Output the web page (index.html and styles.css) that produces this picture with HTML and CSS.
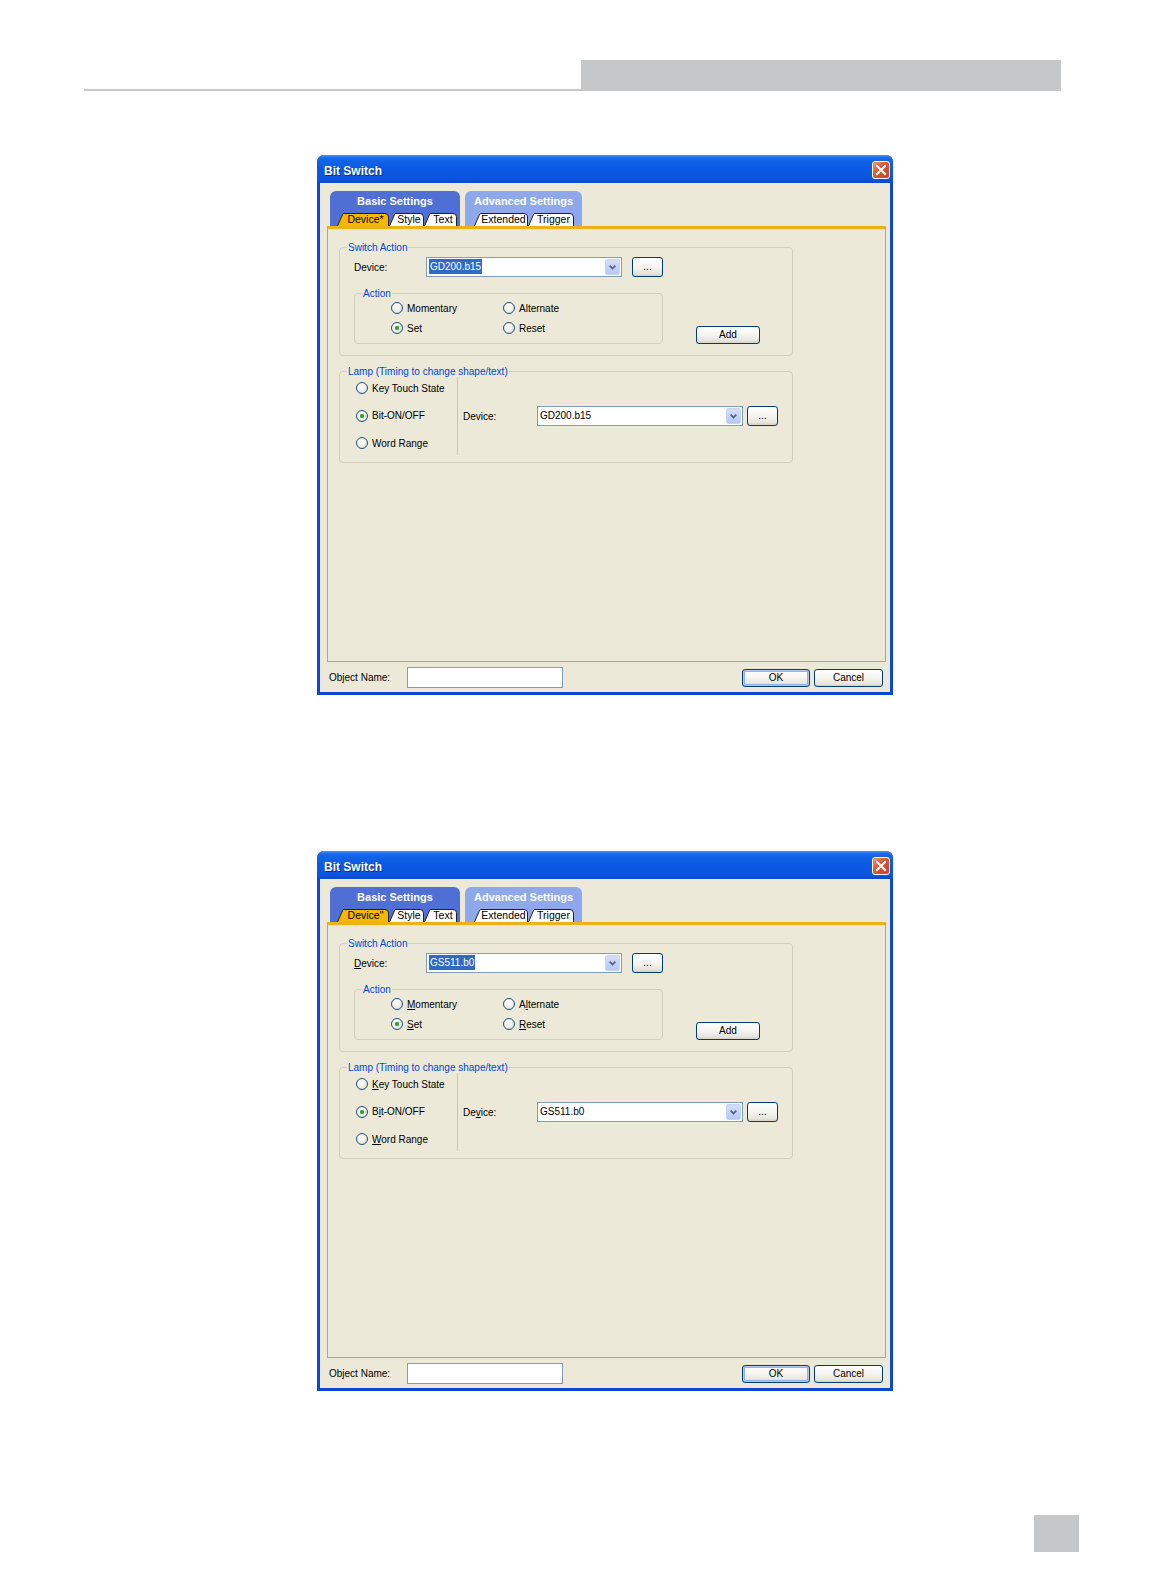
FILE: index.html
```html
<!DOCTYPE html>
<html lang="en">
<head>
  <meta charset="UTF-8" />
  <title>Bit Switch</title>
  <link rel="stylesheet" href="styles.css">
</head>
<body>
  <div class="page-head">
    <div class="rule"></div>
    <div class="head-tab"></div>
  </div>

  <!-- first dialog: keyboard focus not shown -->
  <div class="dialog">
    <div class="titlebar">
      <span class="title">Bit Switch</span>
      <span class="close"><svg width="16" height="16" viewBox="0 0 16 16"><path d="M4 4 L12 12 M12 4 L4 12" stroke="#fff" stroke-width="2" stroke-linecap="square"/></svg></span>
    </div>
    <div class="dlg-body">
      <div class="tabs">
        <div class="tabgroup basic">
          <div class="group-name">Basic Settings</div>
          <div class="subtabs">
            <span class="subtab active t-device"><svg width="52" height="13" viewBox="0 0 52 13"><path d="M0.5 13 L5.5 1.5 Q6 0.5 7 0.5 L48 0.5 Q51.5 0.5 51.5 4 L51.5 13" /></svg><span class="tab-text">Device*</span></span>
            <span class="subtab t-style"><svg width="35" height="13" viewBox="0 0 35 13"><path d="M0.5 13 L5.5 1.5 Q6 0.5 7 0.5 L31 0.5 Q34.5 0.5 34.5 4 L34.5 13" /></svg><span class="tab-text">Style</span></span>
            <span class="subtab t-text"><svg width="33" height="13" viewBox="0 0 33 13"><path d="M0.5 13 L5.5 1.5 Q6 0.5 7 0.5 L29 0.5 Q32.5 0.5 32.5 4 L32.5 13" /></svg><span class="tab-text">Text</span></span>
          </div>
        </div>
        <div class="tabgroup advanced">
          <div class="group-name">Advanced Settings</div>
          <div class="subtabs">
            <span class="subtab t-ext"><svg width="54" height="13" viewBox="0 0 54 13"><path d="M0.5 13 L5.5 1.5 Q6 0.5 7 0.5 L50 0.5 Q53.5 0.5 53.5 4 L53.5 13" /></svg><span class="tab-text">Extended</span></span>
            <span class="subtab t-trig"><svg width="46" height="13" viewBox="0 0 46 13"><path d="M0.5 13 L5.5 1.5 Q6 0.5 7 0.5 L42 0.5 Q45.5 0.5 45.5 4 L45.5 13" /></svg><span class="tab-text">Trigger</span></span>
          </div>
        </div>
      </div>

      <div class="panel">
        <fieldset class="group switch-action">
          <legend>Switch Action</legend>
          <div class="sa-inner">
            <div class="device-row">
              <span class="lbl">Device:</span>
              <div class="combo">
                <span class="val sel"><span>GD200.b15</span></span>
                <span class="arrow"><svg width="7" height="5" viewBox="0 0 7 5"><polyline points="0.7,0.7 3.5,3.5 6.3,0.7" fill="none" stroke="#4d6185" stroke-width="1.7"/></svg></span>
              </div>
              <button class="btn dots">...</button>
            </div>
            <div class="sa-lower">
              <fieldset class="group action">
                <legend>Action</legend>
                <div class="choices">
                  <span class="radio"><span class="dot"></span>Momentary</span>
                  <span class="radio"><span class="dot"></span>Alternate</span>
                  <span class="radio on"><span class="dot"></span>Set</span>
                  <span class="radio"><span class="dot"></span>Reset</span>
                </div>
              </fieldset>
              <button class="btn add">Add</button>
            </div>
          </div>
        </fieldset>

        <fieldset class="group lamp">
          <legend>Lamp (Timing to change shape/text)</legend>
          <div class="lamp-inner">
            <div class="lamp-opts">
              <span class="radio"><span class="dot"></span>Key Touch State</span>
              <span class="radio on"><span class="dot"></span>Bit-ON/OFF</span>
              <span class="radio"><span class="dot"></span>Word Range</span>
            </div>
            <div class="lamp-dev">
              <span class="lbl">Device:</span>
              <div class="combo">
                <span class="val"><span>GD200.b15</span></span>
                <span class="arrow"><svg width="7" height="5" viewBox="0 0 7 5"><polyline points="0.7,0.7 3.5,3.5 6.3,0.7" fill="none" stroke="#4d6185" stroke-width="1.7"/></svg></span>
              </div>
              <button class="btn dots">...</button>
            </div>
          </div>
        </fieldset>
      </div>

      <div class="footer">
        <span class="lbl">Object Name:</span>
        <span class="name-input"></span>
        <div class="btns">
          <button class="btn ok">OK</button>
          <button class="btn cancel">Cancel</button>
        </div>
      </div>
    </div>
  </div>

  <!-- second dialog: access keys underlined -->
  <div class="dialog">
    <div class="titlebar">
      <span class="title">Bit Switch</span>
      <span class="close"><svg width="16" height="16" viewBox="0 0 16 16"><path d="M4 4 L12 12 M12 4 L4 12" stroke="#fff" stroke-width="2" stroke-linecap="square"/></svg></span>
    </div>
    <div class="dlg-body">
      <div class="tabs">
        <div class="tabgroup basic">
          <div class="group-name">Basic Settings</div>
          <div class="subtabs">
            <span class="subtab active t-device"><svg width="52" height="13" viewBox="0 0 52 13"><path d="M0.5 13 L5.5 1.5 Q6 0.5 7 0.5 L48 0.5 Q51.5 0.5 51.5 4 L51.5 13" /></svg><span class="tab-text">Device"</span></span>
            <span class="subtab t-style"><svg width="35" height="13" viewBox="0 0 35 13"><path d="M0.5 13 L5.5 1.5 Q6 0.5 7 0.5 L31 0.5 Q34.5 0.5 34.5 4 L34.5 13" /></svg><span class="tab-text">Style</span></span>
            <span class="subtab t-text"><svg width="33" height="13" viewBox="0 0 33 13"><path d="M0.5 13 L5.5 1.5 Q6 0.5 7 0.5 L29 0.5 Q32.5 0.5 32.5 4 L32.5 13" /></svg><span class="tab-text">Text</span></span>
          </div>
        </div>
        <div class="tabgroup advanced">
          <div class="group-name">Advanced Settings</div>
          <div class="subtabs">
            <span class="subtab t-ext"><svg width="54" height="13" viewBox="0 0 54 13"><path d="M0.5 13 L5.5 1.5 Q6 0.5 7 0.5 L50 0.5 Q53.5 0.5 53.5 4 L53.5 13" /></svg><span class="tab-text">Extended</span></span>
            <span class="subtab t-trig"><svg width="46" height="13" viewBox="0 0 46 13"><path d="M0.5 13 L5.5 1.5 Q6 0.5 7 0.5 L42 0.5 Q45.5 0.5 45.5 4 L45.5 13" /></svg><span class="tab-text">Trigger</span></span>
          </div>
        </div>
      </div>

      <div class="panel">
        <fieldset class="group switch-action">
          <legend>Switch Action</legend>
          <div class="sa-inner">
            <div class="device-row">
              <span class="lbl"><u>D</u>evice:</span>
              <div class="combo">
                <span class="val sel"><span>GS511.b0</span></span>
                <span class="arrow"><svg width="7" height="5" viewBox="0 0 7 5"><polyline points="0.7,0.7 3.5,3.5 6.3,0.7" fill="none" stroke="#4d6185" stroke-width="1.7"/></svg></span>
              </div>
              <button class="btn dots">...</button>
            </div>
            <div class="sa-lower">
              <fieldset class="group action">
                <legend>Action</legend>
                <div class="choices">
                  <span class="radio"><span class="dot"></span><span><u>M</u>omentary</span></span>
                  <span class="radio"><span class="dot"></span><span>A<u>l</u>ternate</span></span>
                  <span class="radio on"><span class="dot"></span><span><u>S</u>et</span></span>
                  <span class="radio"><span class="dot"></span><span><u>R</u>eset</span></span>
                </div>
              </fieldset>
              <button class="btn add">Add</button>
            </div>
          </div>
        </fieldset>

        <fieldset class="group lamp">
          <legend>Lamp (Timing to change shape/text)</legend>
          <div class="lamp-inner">
            <div class="lamp-opts">
              <span class="radio"><span class="dot"></span><span><u>K</u>ey Touch State</span></span>
              <span class="radio on"><span class="dot"></span><span>B<u>i</u>t-ON/OFF</span></span>
              <span class="radio"><span class="dot"></span><span><u>W</u>ord Range</span></span>
            </div>
            <div class="lamp-dev">
              <span class="lbl">De<u>v</u>ice:</span>
              <div class="combo">
                <span class="val"><span>GS511.b0</span></span>
                <span class="arrow"><svg width="7" height="5" viewBox="0 0 7 5"><polyline points="0.7,0.7 3.5,3.5 6.3,0.7" fill="none" stroke="#4d6185" stroke-width="1.7"/></svg></span>
              </div>
              <button class="btn dots">...</button>
            </div>
          </div>
        </fieldset>
      </div>

      <div class="footer">
        <span class="lbl">Object Name:</span>
        <span class="name-input"></span>
        <div class="btns">
          <button class="btn ok">OK</button>
          <button class="btn cancel">Cancel</button>
        </div>
      </div>
    </div>
  </div>

  <div class="page-no"></div>
</body>
</html>
```

FILE: styles.css
```css
body {
  margin: 0;
  background: #fff;
  font-family: "Liberation Sans", Arial, sans-serif;
}
.page-head {
  display: flex;
  align-items: flex-end;
  width: 977px;
  height: 31px;
  margin: 60px 0 0 84px;
}
.page-head .rule {
  flex: 1;
  height: 2px;
  background: #c8c8c8;
}
.page-head .head-tab {
  width: 480px;
  height: 31px;
  background: #c6c7c9;
}
.page-no {
  width: 45px;
  height: 37px;
  margin: 124px 0 0 1034px;
  background: #c6c7c9;
}

/* dialog frame */
.dialog {
  width: 576px;
  height: 540px;
  margin: 64px 0 0 317px;
  display: flex;
  flex-direction: column;
  background: #0b47d2;
  border-radius: 7px 7px 0 0;
  font-size: 10px;
  color: #000;
}
.dialog + .dialog {
  margin-top: 156px;
}
.titlebar {
  height: 28px;
  flex: none;
  display: flex;
  align-items: center;
  justify-content: space-between;
  padding: 0 3px 0 7px;
  border-radius: 7px 7px 0 0;
  background: linear-gradient(#4b93f8 0, #1667ea 3px, #0b5ae4 45%, #0a56de 85%, #0949c8 100%);
}
.title {
  padding-top: 4px;
  color: #fff;
  font-weight: bold;
  font-size: 12px;
  text-shadow: 1px 1px 0 #0b2a8a;
}
.close {
  width: 18px;
  height: 18px;
  margin-top: 1px;
  box-sizing: border-box;
  display: flex;
  align-items: center;
  justify-content: center;
  border: 1px solid #fff;
  border-radius: 3px;
  background: linear-gradient(135deg, #ec9a7c 0%, #de5a33 40%, #c8421c 100%);
}
.dlg-body {
  flex: 1;
  margin: 0 3px 3px;
  padding-top: 8px;
  display: flex;
  flex-direction: column;
  background: #ece9d8;
}

/* tab groups */
.tabs {
  display: flex;
  gap: 5px;
  height: 35px;
  padding-left: 10px;
}
.tabgroup {
  display: flex;
  flex-direction: column;
  border-radius: 6px 6px 0 0;
}
.basic {
  width: 130px;
  background: #4f6fd5;
}
.advanced {
  width: 117px;
  background: #8fa8ec;
}
.group-name {
  height: 20px;
  line-height: 21px;
  text-align: center;
  color: #fff;
  font-weight: bold;
  font-size: 11px;
}
.subtabs {
  display: flex;
  height: 13px;
  margin-top: 2px;
}
.basic .subtabs {
  padding-left: 7px;
}
.advanced .subtabs {
  padding-left: 9px;
}
.subtab {
  position: relative;
  height: 13px;
  line-height: 13px;
}
.subtab svg {
  position: absolute;
  left: 0;
  top: 0;
}
.subtab path {
  fill: #fff;
  stroke: #222;
  stroke-width: 1;
}
.subtab.active path {
  fill: #f4b702;
}
.tab-text {
  position: relative;
  display: block;
  text-align: center;
  padding-left: 5px;
  font-size: 10.5px;
}
.t-device { width: 52px; }
.t-style { width: 35px; }
.t-text { width: 33px; }
.t-ext { width: 54px; }
.t-trig { width: 46px; }

/* panel */
.panel {
  height: 436px;
  flex: none;
  box-sizing: border-box;
  margin: 0 4px 0 7px;
  border: 1px solid #a7a69a;
  border-top: 3px solid #eeb213;
}
fieldset.group {
  margin: 0;
  padding: 0;
  min-width: 0;
  box-sizing: border-box;
  border: 1px solid #d0cebf;
  border-radius: 4px;
}
fieldset.group legend {
  color: #0046d5;
  line-height: 11px;
  margin-left: 7px;
  padding: 0 1px;
}
.switch-action {
  width: 454px;
  margin: 13px 0 0 11px !important;
}
.sa-inner {
  padding: 4px 0 11px 14px;
}
.device-row {
  display: flex;
  align-items: center;
  height: 20px;
}
.device-row .lbl {
  width: 72px;
}
.device-row .combo {
  width: 196px;
}
.device-row .dots {
  margin-left: 10px;
}
.sa-lower {
  display: flex;
  align-items: flex-end;
  margin-top: 11px;
}
.action {
  width: 309px;
}
.choices {
  display: grid;
  grid-template-columns: 112px 112px;
  grid-auto-rows: 18px;
  row-gap: 2px;
  padding: 0 0 6px 36px;
}
.add {
  width: 64px;
  height: 18px;
  margin-left: 33px;
}
.lamp {
  width: 454px;
  margin: 10px 0 0 11px !important;
}
.lamp-inner {
  display: flex;
  padding-bottom: 7px;
}
.lamp-opts {
  width: 118px;
  height: 78px;
  box-sizing: border-box;
  padding: 1px 0 2px 16px;
  display: flex;
  flex-direction: column;
  justify-content: space-between;
  border-right: 1px solid #c8c5b4;
}
.lamp-opts .radio {
  height: 20px;
}
.lamp-dev {
  display: flex;
  align-items: center;
  padding-left: 5px;
}
.lamp-dev .lbl {
  width: 74px;
}
.lamp-dev .combo {
  width: 206px;
}
.lamp-dev .dots {
  margin-left: 4px;
}

/* controls */
.radio {
  display: flex;
  align-items: center;
  gap: 4px;
}
.dot {
  width: 12px;
  height: 12px;
  flex: none;
  box-sizing: border-box;
  border-radius: 50%;
  border: 1px solid #1c5180;
  background: radial-gradient(circle at 40% 35%, #fff 0%, #f2f1ea 45%, #d6d3c6 100%);
  display: flex;
  align-items: center;
  justify-content: center;
}
.radio.on .dot::after {
  content: "";
  width: 4px;
  height: 4px;
  border-radius: 50%;
  background: #2fa02f;
  box-shadow: 0 0 1px #58c458;
}
.combo {
  height: 20px;
  box-sizing: border-box;
  display: flex;
  padding: 1px;
  border: 1px solid #7f9db9;
  background: #fff;
}
.combo .val {
  flex: 1;
  line-height: 16px;
  padding-left: 1px;
}
.combo .val.sel span {
  display: inline-block;
  line-height: 15px;
  padding: 0 1px;
  background: #316ac5;
  color: #fff;
}
.combo .arrow {
  width: 15px;
  box-sizing: border-box;
  display: flex;
  align-items: center;
  justify-content: center;
  border: 1px solid #c6d4f6;
  border-radius: 2px;
  background: linear-gradient(#d4def9, #b6c8f4);
}
.btn {
  font: inherit;
  color: #000;
  padding: 0;
  box-sizing: border-box;
  border: 1px solid #003c74;
  border-radius: 3px;
  background: linear-gradient(#ffffff 0%, #f5f4ef 50%, #e8e5dc 85%, #d6d0c5 100%);
  line-height: 14px;
}
.dots {
  width: 31px;
  height: 20px;
}
.footer {
  height: 30px;
  flex: none;
  box-sizing: border-box;
  display: flex;
  align-items: flex-start;
  padding: 5px 7px 0 9px;
}
.footer .lbl {
  width: 78px;
  line-height: 21px;
}
.name-input {
  width: 156px;
  height: 21px;
  box-sizing: border-box;
  border: 1px solid #7f9db9;
  background: #fff;
}
.btns {
  display: flex;
  gap: 4px;
  margin: 2px 0 0 auto;
}
.ok {
  width: 68px;
  height: 18px;
  box-shadow: inset 0 0 0 1px #b5cbf1, inset 0 0 0 2px #8fb0ea;
}
.cancel {
  width: 69px;
  height: 18px;
}
```
